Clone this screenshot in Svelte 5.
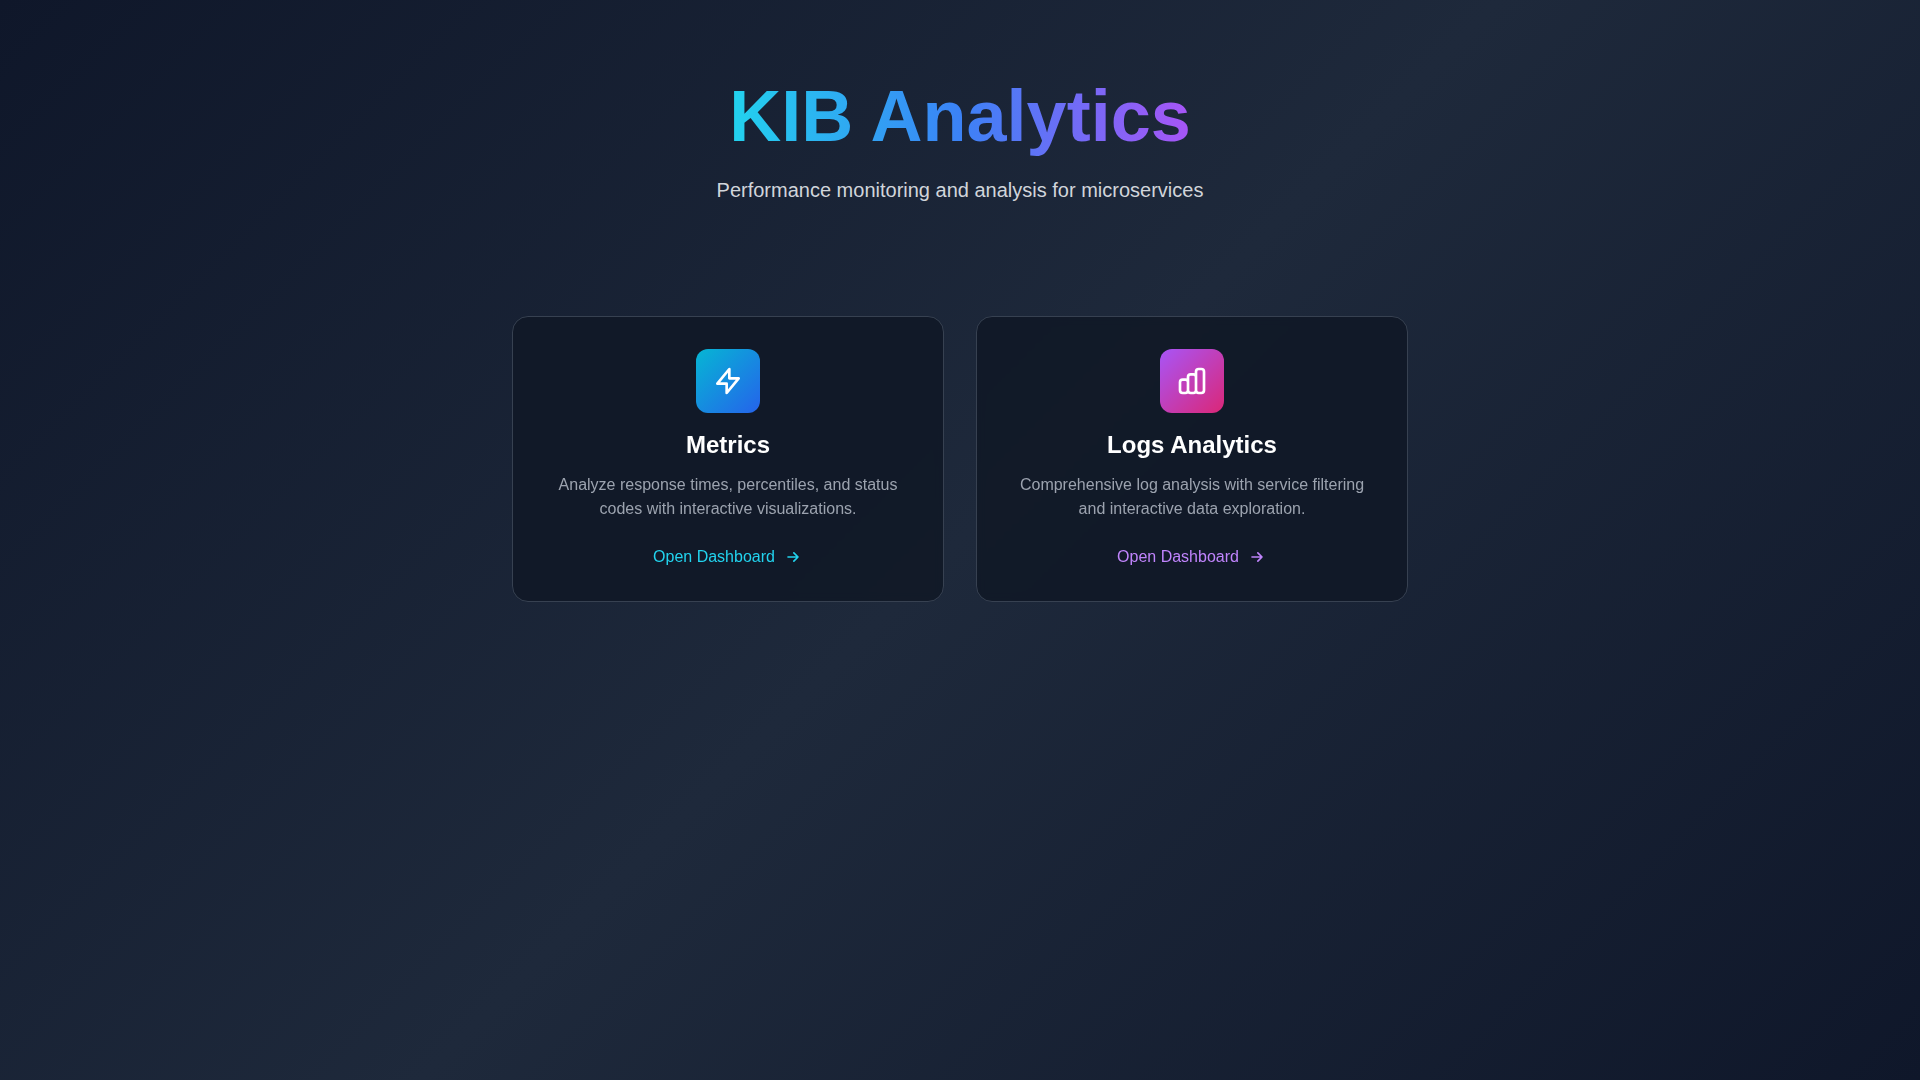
<script>
  const cards = [
    {
      id: 'metrics',
      title: 'Metrics',
      text: 'Analyze response times, percentiles, and status codes with interactive visualizations.',
      icon: 'M13 10V3L4 14h7v7l9-11h-7z'
    },
    {
      id: 'logs',
      title: 'Logs Analytics',
      text: 'Comprehensive log analysis with service filtering and interactive data exploration.',
      icon: 'M9 19v-6a2 2 0 00-2-2H5a2 2 0 00-2 2v6a2 2 0 002 2h2a2 2 0 002-2zm0 0V9a2 2 0 012-2h2a2 2 0 012 2v10m-6 0a2 2 0 002 2h2a2 2 0 002-2m0 0V5a2 2 0 012-2h2a2 2 0 012 2v14a2 2 0 01-2 2h-2a2 2 0 01-2-2z'
    }
  ];
</script>

<main class="page">
  <div class="container">
    <header class="hero">
      <h1>KIB Analytics</h1>
      <p>Performance monitoring and analysis for microservices</p>
    </header>
    <div class="cards">
      {#each cards as card (card.id)}
        <a class="card {card.id}" href="#{card.id}">
          <span class="tile">
            <svg viewBox="0 0 24 24" width="32" height="32" aria-hidden="true"><path d={card.icon} /></svg>
          </span>
          <h2>{card.title}</h2>
          <p>{card.text}</p>
          <span class="open">
            <span>Open Dashboard</span>
            <svg viewBox="0 0 24 24" width="20" height="20" aria-hidden="true"><path d="M13 7l5 5m0 0l-5 5m5-5H6" /></svg>
          </span>
        </a>
      {/each}
    </div>
  </div>
</main>

<style>
  :global(body) {
    margin: 0;
  }
  .page {
    box-sizing: border-box;
    min-height: 100vh;
    padding: 64px 24px;
    background: linear-gradient(135deg, #0f172a 0%, #1e293b 50%, #0f172a 100%);
    font-family: 'Liberation Sans', Arial, sans-serif;
    color: #fff;
  }
  .container {
    max-width: 1280px;
    margin: 0 auto;
  }
  .hero {
    display: flex;
    flex-direction: column;
    align-items: center;
    text-align: center;
    margin-bottom: 112px;
  }
  h1 {
    margin: 0 0 8px;
    padding: 8px 0;
    font-size: 72px;
    line-height: 88px;
    font-weight: 700;
    background: linear-gradient(to right, #22d3ee, #3b82f6, #a855f7);
    background-clip: text;
    -webkit-background-clip: text;
    color: transparent;
  }
  .hero p {
    margin: 0;
    font-size: 20px;
    line-height: 28px;
    color: #d1d5db;
  }
  .cards {
    display: grid;
    grid-template-columns: repeat(auto-fit, minmax(320px, 1fr));
    gap: 32px;
    max-width: 896px;
    margin: 0 auto;
  }
  .card {
    display: flex;
    flex-direction: column;
    align-items: center;
    padding: 32px;
    border: 1px solid #374151;
    border-radius: 16px;
    background: rgba(17, 24, 39, 0.9);
    backdrop-filter: blur(4px);
    text-align: center;
    text-decoration: none;
  }
  .tile {
    display: flex;
    align-items: center;
    justify-content: center;
    width: 64px;
    height: 64px;
    margin-bottom: 16px;
    border-radius: 12px;
    color: #fff;
  }
  .metrics .tile {
    background: linear-gradient(to bottom right, #06b6d4, #2563eb);
  }
  .logs .tile {
    background: linear-gradient(to bottom right, #a855f7, #db2777);
  }
  svg {
    fill: none;
    stroke: currentColor;
    stroke-width: 2;
    stroke-linecap: round;
    stroke-linejoin: round;
  }
  h2 {
    margin: 0 0 12px;
    font-size: 24px;
    line-height: 32px;
    color: #fff;
  }
  .card p {
    margin: 0 0 24px;
    font-size: 16px;
    line-height: 24px;
    color: #9ca3af;
  }
  .open {
    display: flex;
    align-items: center;
    gap: 8px;
    font-size: 16px;
    line-height: 24px;
  }
  .metrics .open {
    color: #22d3ee;
  }
  .logs .open {
    color: #c084fc;
  }
</style>
